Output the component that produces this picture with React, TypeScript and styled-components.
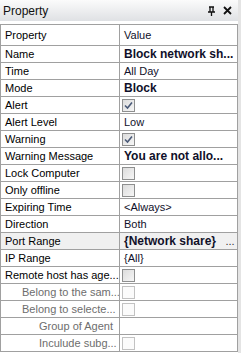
import React from "react";
import styled, { createGlobalStyle } from "styled-components";

const GlobalStyle = createGlobalStyle`
    html, body {
        margin: 0;
        padding: 0;
        background: #ffffff;
    }
    body {
        font-family: "Liberation Sans", Arial, sans-serif;
        font-size: 11px;
        color: #000;
    }
`;

type Kind = "text" | "bold" | "check" | "empty" | "button";

interface PropRow {
    name: string;
    kind: Kind;
    value?: string;
    checked?: boolean;
    level?: number;
    disabled?: boolean;
    selected?: boolean;
}

const rows: PropRow[] = [
    { name: "Name", kind: "bold", value: "Block network sh..." },
    { name: "Time", kind: "text", value: "All Day" },
    { name: "Mode", kind: "bold", value: "Block" },
    { name: "Alert", kind: "check", checked: true },
    { name: "Alert Level", kind: "text", value: "Low" },
    { name: "Warning", kind: "check", checked: true },
    { name: "Warning Message", kind: "bold", value: "You are not allo..." },
    { name: "Lock Computer", kind: "check" },
    { name: "Only offline", kind: "check" },
    { name: "Expiring Time", kind: "text", value: "<Always>" },
    { name: "Direction", kind: "text", value: "Both" },
    { name: "Port Range", kind: "button", value: "{Network share}", selected: true },
    { name: "IP Range", kind: "text", value: "{All}" },
    { name: "Remote host has age...", kind: "check" },
    { name: "Belong to the sam...", kind: "check", level: 1, disabled: true },
    { name: "Belong to selecte...", kind: "check", level: 1, disabled: true },
    { name: "Group of Agent", kind: "empty", level: 2, disabled: true },
    { name: "Inculude subg...", kind: "check", level: 2, disabled: true },
];

const Panel = styled.div`
    width: 241px;
    height: 353px;
    overflow: hidden;
    display: flex;
    flex-direction: column;
    background: #ffffff;
    box-sizing: border-box;
    border-right: 3px solid #e4e4e4;
`;

const TitleBar = styled.div`
    height: 21px;
    flex: none;
    display: flex;
    align-items: center;
    padding: 0 6px 0 3px;
    background: linear-gradient(#fbfbfb, #dfe1e4);
    font-size: 12px;
    color: #111;
`;

const TitleText = styled.span`
    flex: 1;
`;

const TitleIcons = styled.div`
    display: flex;
    align-items: center;
    gap: 7px;
`;

const Grid = styled.div`
    margin-top: 3px;
    border-top: 1px solid #a0a0a0;
    border-left: 1px solid #a0a0a0;
    border-right: 1px solid #a0a0a0;
`;

const Row = styled.div<{ $head?: boolean; $selected?: boolean }>`
    display: grid;
    grid-template-columns: 119px 1fr;
    height: ${(p) => (p.$head ? 20 : 16)}px;
    border-bottom: 1px solid #a0a0a0;
    background: ${(p) => (p.$selected ? "#f0f0f0" : "#ffffff")};
`;

const NameCell = styled.div<{ $level: number; $disabled?: boolean }>`
    display: flex;
    align-items: center;
    padding-left: ${(p) => 4 + p.$level * 17}px;
    padding-right: 2px;
    border-right: 1px solid #a0a0a0;
    color: ${(p) => (p.$disabled ? "#6d6d6d" : "#000")};
    white-space: nowrap;
    overflow: hidden;
`;

const ValueCell = styled.div<{ $bold?: boolean }>`
    display: flex;
    align-items: center;
    padding-left: 4px;
    font-weight: ${(p) => (p.$bold ? 700 : 400)};
    font-size: ${(p) => (p.$bold ? 12 : 11)}px;
    white-space: nowrap;
    overflow: hidden;
    color: #10102a;
`;

const CheckCell = styled.div`
    display: flex;
    align-items: center;
    padding-left: 2px;
`;

const Box = styled.span<{ $disabled?: boolean }>`
    width: 11px;
    height: 11px;
    border: 1px solid ${(p) => (p.$disabled ? "#c2c2c2" : "#8e8f8f")};
    background: ${(p) =>
        p.$disabled ? "#fbfbfb" : "linear-gradient(135deg, #dcdcdc, #f6f6f6)"};
    display: flex;
    align-items: center;
    justify-content: center;
`;

const ButtonValue = styled.div`
    flex: 1;
    font-weight: 700;
    font-size: 12px;
`;

const Ellipsis = styled.span`
    width: 14px;
    text-align: center;
    font-size: 11px;
    font-weight: 400;
    color: #333;
`;

const Check = () => (
    <svg width="9" height="9" viewBox="0 0 9 9">
        <path d="M1 4.5 L3.5 7 L8 1.5" stroke="#4a5a78" strokeWidth="1.6" fill="none" />
    </svg>
);

const PinIcon = () => (
    <svg width="9" height="10" viewBox="0 0 9 10">
        <path d="M2 1 H7 M3 1 V6 M6 1 V6 M1 6 H8 M4.5 6 V10" stroke="#111" strokeWidth="1.3" fill="none" />
    </svg>
);

const CloseIcon = () => (
    <svg width="9" height="9" viewBox="0 0 9 9">
        <path d="M1 1 L8 8 M8 1 L1 8" stroke="#111" strokeWidth="1.8" />
    </svg>
);

const renderValue = (row: PropRow) => {
    if (row.kind === "check") {
        return (
            <CheckCell>
                <Box $disabled={row.disabled}>{row.checked && <Check />}</Box>
            </CheckCell>
        );
    }
    if (row.kind === "empty") return <ValueCell />;
    if (row.kind === "button") {
        return (
            <ValueCell>
                <ButtonValue>{row.value}</ButtonValue>
                <Ellipsis>...</Ellipsis>
            </ValueCell>
        );
    }
    return <ValueCell $bold={row.kind === "bold"}>{row.value}</ValueCell>;
};

export default function App() {
    return (
        <>
            <GlobalStyle />
            <Panel>
                <TitleBar>
                    <TitleText>Property</TitleText>
                    <TitleIcons>
                        <PinIcon />
                        <CloseIcon />
                    </TitleIcons>
                </TitleBar>
                <Grid>
                    <Row $head>
                        <NameCell $level={0}>Property</NameCell>
                        <ValueCell>Value</ValueCell>
                    </Row>
                    {rows.map((row, i) => (
                        <Row key={i} $selected={row.selected}>
                            <NameCell $level={row.level ?? 0} $disabled={row.disabled}>
                                {row.name}
                            </NameCell>
                            {renderValue(row)}
                        </Row>
                    ))}
                </Grid>
            </Panel>
        </>
    );
}
